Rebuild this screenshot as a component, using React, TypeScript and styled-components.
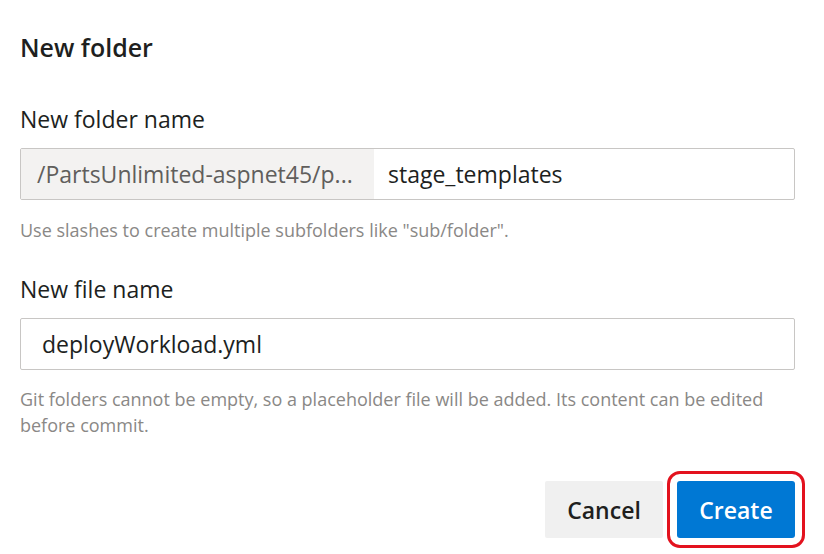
import React from "react"
import styled, { createGlobalStyle } from "styled-components"

/////////////////////////////////////////////////////////////////////////////

const GlobalStyle = createGlobalStyle`
  html, body {
    margin: 0;
    padding: 0;
    background: #ffffff;
  }
  body {
    font-family: "Open Sans", "Noto Sans", "Liberation Sans", sans-serif;
    color: #201f1e;
  }
`

const App: React.FC = () => {
  return (
    <Dialog>
      <GlobalStyle />
      <Title>New folder</Title>

      <Label>New folder name</Label>
      <InputBox>
        <Prefix>/PartsUnlimited-aspnet45/p...</Prefix>
        <InputText $indent={14}>stage_templates</InputText>
      </InputBox>
      <Hint>Use slashes to create multiple subfolders like "sub/folder".</Hint>

      <Label $top={31}>New file name</Label>
      <InputBox>
        <InputText $indent={21}>deployWorkload.yml</InputText>
      </InputBox>
      <Hint $top={16}>
        Git folders cannot be empty, so a placeholder file will be added. Its
        content can be edited before commit.
      </Hint>

      <Footer>
        <Button>Cancel</Button>
        <Button $primary>Create</Button>
      </Footer>
    </Dialog>
  )
}

/////////////////////////////////////////////////////////////////////////////

const Dialog = styled.div`
  width: 824px;
  height: 554px;
  padding: 30px 29px 0 20px;
  box-sizing: border-box;
  display: flex;
  flex-direction: column;
`

const Title = styled.div`
  font-size: 25px;
  line-height: 34px;
  font-weight: 600;
  color: #201f1e;
`

const Label = styled.div<{ $top?: number }>`
  margin-top: ${(p) => p.$top ?? 40}px;
  font-size: 23px;
  line-height: 30px;
  color: #201f1e;
`

const InputBox = styled.div`
  margin-top: 14px;
  height: 52px;
  box-sizing: border-box;
  border: 1px solid #c8c6c4;
  border-radius: 2px;
  display: flex;
  align-items: stretch;
  overflow: hidden;
`

const Prefix = styled.div`
  width: 353px;
  padding-left: 16px;
  box-sizing: border-box;
  background: #f3f2f1;
  color: #605e5c;
  font-size: 23px;
  display: flex;
  align-items: center;
  white-space: nowrap;
`

const InputText = styled.div<{ $indent: number }>`
  padding-left: ${(p) => p.$indent}px;
  font-size: 23px;
  color: #201f1e;
  display: flex;
  align-items: center;
`

const Hint = styled.div<{ $top?: number }>`
  margin-top: ${(p) => p.$top ?? 17}px;
  font-size: 18px;
  line-height: 26px;
  color: #8a8886;
`

const Footer = styled.div`
  margin-top: 43px;
  display: flex;
  justify-content: flex-end;
  gap: 14px;
`

const Button = styled.div<{ $primary?: boolean }>`
  height: 57px;
  padding: 0 22px;
  min-width: 118px;
  box-sizing: border-box;
  display: flex;
  align-items: center;
  justify-content: center;
  font-size: 23px;
  font-weight: 600;
  background: ${(p) => (p.$primary ? "#0078d4" : "#f0f0f0")};
  color: ${(p) => (p.$primary ? "#ffffff" : "#201f1e")};
  outline: ${(p) => (p.$primary ? "3px solid #e3121e" : "none")};
  outline-offset: 7px;
  border-radius: ${(p) => (p.$primary ? "3px" : "2px")};
`

export default App
